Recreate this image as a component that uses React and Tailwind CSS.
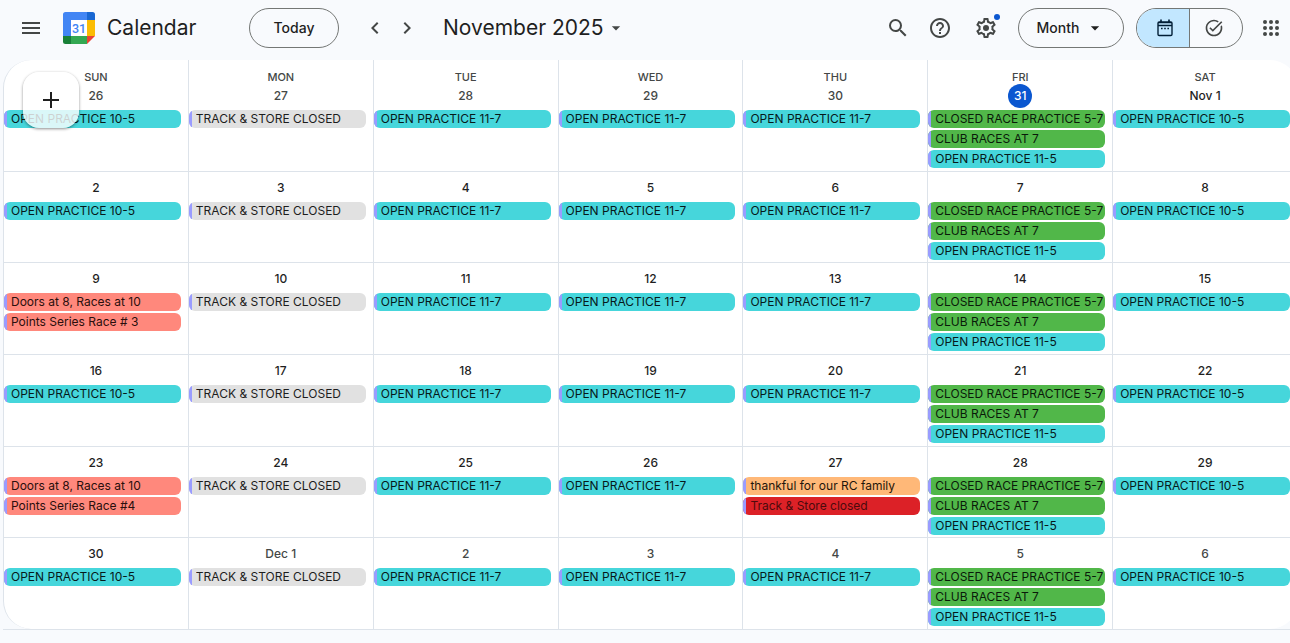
import {
  MdArrowDropDown,
  MdChevronLeft,
  MdChevronRight,
  MdHelpOutline,
  MdMenu,
  MdSearch,
  MdTaskAlt,
} from "react-icons/md";

const WEEKDAYS = ["SUN", "MON", "TUE", "WED", "THU", "FRI", "SAT"];

const COLORS = {
  cyan: "bg-[#46d6db] text-[#06191a]",
  gray: "bg-[#e1e1e1] text-[#1d1d1d]",
  green: "bg-[#51b749] text-[#0a1a09]",
  salmon: "bg-[#ff887c] text-[#2a0f0d]",
  orange: "bg-[#ffb878] text-[#1f160b]",
  red: "bg-[#dc2127] text-[#4d0a0c]",
};

const sunday = [{ title: "OPEN PRACTICE 10-5", color: "cyan" }];
const closed = [{ title: "TRACK & STORE CLOSED", color: "gray" }];
const weekday = [{ title: "OPEN PRACTICE 11-7", color: "cyan" }];
const friday = [
  { title: "CLOSED RACE PRACTICE 5-7", color: "green" },
  { title: "CLUB RACES AT 7", color: "green" },
  { title: "OPEN PRACTICE 11-5", color: "cyan" },
];
const saturday = [{ title: "OPEN PRACTICE 10-5", color: "cyan" }];

// Regular opening hours, Sunday to Saturday
const regularWeek = [
  sunday,
  closed,
  weekday,
  weekday,
  weekday,
  friday,
  saturday,
];

const raceDay = (series) => [
  { title: "Doors at 8, Races at 10", color: "salmon" },
  { title: series, color: "salmon" },
];

const thanksgiving = [
  { title: "thankful for our RC family", color: "orange" },
  { title: "Track & Store closed", color: "red" },
];

const WEEKS = [
  { days: ["26", "27", "28", "29", "30", "31", "Nov 1"] },
  { days: ["2", "3", "4", "5", "6", "7", "8"] },
  {
    days: ["9", "10", "11", "12", "13", "14", "15"],
    special: { 0: raceDay("Points Series Race # 3") },
  },
  { days: ["16", "17", "18", "19", "20", "21", "22"] },
  {
    days: ["23", "24", "25", "26", "27", "28", "29"],
    special: { 0: raceDay("Points Series Race #4"), 4: thanksgiving },
  },
  { days: ["30", "Dec 1", "2", "3", "4", "5", "6"] },
];

// Days outside of November are drawn lighter
const isOutside = (week, day) =>
  (week === 0 && day < 6) || (week === 5 && day > 0);

const CalendarLogo = () => (
  <svg viewBox="0 0 32 32" className="size-8 shrink-0" aria-hidden="true">
    <path d="M2.5 0H24v8H8v16H0V2.5A2.5 2.5 0 0 1 2.5 0z" fill="#4285f4" />
    <path d="M24 0h5.5A2.5 2.5 0 0 1 32 2.5V8h-8z" fill="#1967d2" />
    <path d="M24 8h8v16h-8z" fill="#fbbc04" />
    <path d="M8 24h16v8H8z" fill="#34a853" />
    <path d="M0 24h8v8H2.5A2.5 2.5 0 0 1 0 29.5z" fill="#188038" />
    <path d="M24 24h8l-8 8z" fill="#ea4335" />
    <path d="M8 8h16v16H8z" fill="#fff" />
    <text
      x="16"
      y="20.500"
      textAnchor="middle"
      fontSize="12.500"
      fontWeight="500"
      fontFamily="Roboto, sans-serif"
      fill="#4285f4"
    >
      31
    </text>
  </svg>
);

const SettingsIcon = () => (
  <svg viewBox="0 0 24 24" className="size-6" fill="currentColor">
    <path d="M19.430 12.980c.04-.32.07-.64.07-.98s-.03-.66-.07-.98l2.110-1.650c.19-.15.24-.42.12-.64l-2-3.460a.5.5 0 0 0-.61-.22l-2.490 1c-.52-.4-1.080-.73-1.690-.98l-.38-2.650A.488.488 0 0 0 14 2h-4c-.25 0-.46.18-.49.42l-.38 2.650c-.61.25-1.170.59-1.690.98l-2.490-1a.566.566 0 0 0-.18-.03c-.17 0-.34.09-.43.25l-2 3.460c-.13.22-.07.49.12.64l2.110 1.650c-.04.32-.07.65-.07.98s.03.66.07.98l-2.110 1.650c-.19.15-.24.42-.12.64l2 3.460a.5.5 0 0 0 .61.22l2.490-1c.52.4 1.080.73 1.690.98l.38 2.650c.03.24.24.42.49.42h4c.25 0 .46-.18.49-.42l.38-2.650c.61-.25 1.170-.59 1.690-.98l2.490 1c.06.02.12.03.18.03.17 0 .34-.09.43-.25l2-3.460c.12-.22.07-.49-.12-.64l-2.110-1.650zm-1.980-1.710c.04.31.05.52.05.73s-.02.43-.05.73l-.14 1.130.89.7 1.080.84-.7 1.210-1.270-.51-1.040-.42-.9.68c-.43.32-.84.56-1.250.73l-1.060.43-.16 1.130-.2 1.350h-1.400l-.19-1.350-.16-1.130-1.060-.43c-.43-.18-.83-.41-1.230-.71l-.91-.7-1.060.43-1.270.51-.7-1.210 1.080-.84.89-.7-.14-1.130c-.03-.31-.05-.54-.05-.74s.02-.43.05-.73l.14-1.130-.89-.7-1.080-.84.7-1.210 1.270.51 1.040.42.9-.68c.43-.32.84-.56 1.250-.73l1.060-.43.16-1.130.2-1.350h1.390l.19 1.350.16 1.130 1.060.43c.43.18.83.41 1.230.71l.91.7 1.060-.43 1.270-.51.7 1.210-1.070.85-.89.7.14 1.130z" />
    <circle cx="12" cy="12" r="3" />
  </svg>
);

const CalendarIcon = () => (
  <svg viewBox="0 0 20 20" className="size-5" fill="none" stroke="currentColor">
    <rect x="3" y="4" width="14" height="13.500" rx="1.200" strokeWidth="1.400" />
    <path d="M6 1.500V4M14 1.500V4" strokeWidth="1.600" />
    <path d="M3 4.700h14M3 7.500h14" strokeWidth="1.300" />
    <path d="M6 10.500h1.600M9.200 10.500h1.600M12.400 10.500h1.600" strokeWidth="1.500" />
  </svg>
);

const AppsIcon = () => (
  <svg viewBox="0 0 24 24" className="size-6" fill="currentColor">
    {[6, 12, 18].map((y) =>
      [6, 12, 18].map((x) => <circle key={`${x}-${y}`} cx={x} cy={y} r="2" />),
    )}
  </svg>
);

const PlusIcon = () => (
  <svg viewBox="0 0 24 24" className="size-6" stroke="currentColor">
    <path d="M12 4v16M4 12h16" strokeWidth="2" />
  </svg>
);

const Header = () => (
  <header className="flex h-[60px] shrink-0 items-start justify-between pt-2 pr-[7px] pl-[19px] text-[#444746]">
    <div className="flex h-10 items-center">
      <button type="button" aria-label="Main menu" className="mr-5">
        <MdMenu className="size-6" />
      </button>
      <div className="flex w-[186px] items-center gap-3">
        <CalendarLogo />
        <span className="text-[21px] leading-7 text-[#1f1f1f]">Calendar</span>
      </div>
      <button
        type="button"
        className="h-10 w-[90px] rounded-full border border-[#747775] text-sm font-medium text-[#1f1f1f]"
      >
        Today
      </button>
      <div className="mx-6 flex gap-2">
        <button type="button" aria-label="Previous month">
          <MdChevronLeft className="size-6" />
        </button>
        <button type="button" aria-label="Next month">
          <MdChevronRight className="size-6" />
        </button>
      </div>
      <button type="button" className="flex items-center gap-[2px]">
        <span className="text-[21px] leading-7 whitespace-nowrap text-[#1f1f1f]">
          November 2025
        </span>
        <MdArrowDropDown className="size-5" />
      </button>
    </div>

    <div className="flex h-10 items-center">
      <button type="button" aria-label="Search" className="mr-[18px]">
        <MdSearch className="size-6" />
      </button>
      <button type="button" aria-label="Support" className="mr-[22px]">
        <MdHelpOutline className="size-6" />
      </button>
      <button type="button" aria-label="Settings" className="relative mr-5">
        <SettingsIcon />
        <span className="absolute -top-0.5 -right-0.5 size-[6px] rounded-full bg-[#0b57d0]"></span>
      </button>
      <button
        type="button"
        className="mr-3 flex h-10 w-[106px] items-center justify-center gap-[6px] rounded-full border border-[#747775] text-sm font-medium text-[#1f1f1f]"
      >
        Month
        <MdArrowDropDown className="size-5" />
      </button>
      <div className="mr-4 flex h-10 w-[107px] overflow-hidden rounded-full border border-[#747775]">
        <button
          type="button"
          aria-label="Calendar view"
          className="flex flex-1 items-center justify-center border-r border-[#747775] bg-[#c2e7ff] pl-1 text-[#001d35]"
        >
          <CalendarIcon />
        </button>
        <button
          type="button"
          aria-label="Tasks view"
          className="flex flex-1 items-center justify-center pr-1"
        >
          <MdTaskAlt className="size-5" />
        </button>
      </div>
      <button type="button" aria-label="Google apps">
        <AppsIcon />
      </button>
    </div>
  </header>
);

const EventChip = ({ title, color }) => (
  <button
    type="button"
    className={`flex h-[18px] w-full overflow-hidden rounded-md text-left text-xs leading-[18px] ${COLORS[color]}`}
  >
    <span className="mr-1 h-full w-[3px] shrink-0 bg-[#9a9cff]"></span>
    <span className="min-w-0 overflow-hidden whitespace-nowrap">{title}</span>
  </button>
);

const DayCell = ({ label, events, outside, today }) => (
  <td className="min-w-0 border-r border-[#dde3ea] pt-1">
    <div className="flex h-6 items-center justify-center">
      <span
        className={`text-xs font-medium ${
          today
            ? "flex size-6 items-center justify-center rounded-full bg-[#0b57d0] text-white"
            : outside
              ? "text-[#444746]"
              : "text-[#1f1f1f]"
        }`}
      >
        {label}
      </span>
    </div>
    <div className="mt-[2px] mr-[7px] flex flex-col gap-[2px]">
      {events.map((event) => (
        <EventChip key={event.title} {...event} />
      ))}
    </div>
  </td>
);

const MonthGrid = () => (
  <main className="relative mb-[13px] -mr-2 ml-[3px] flex flex-1 flex-col border-b border-[#dde3ea]">
    <table className="flex flex-1 flex-col overflow-hidden rounded-[28px] border-l border-[#dde3ea] bg-white">
      <thead>
        <tr className="grid h-5 grid-cols-7">
          {WEEKDAYS.map((day) => (
            <th
              key={day}
              scope="col"
              className="border-r border-[#dde3ea] pt-2 text-center text-[11px] leading-[18px] font-medium text-[#444746]"
            >
              {day}
            </th>
          ))}
        </tr>
      </thead>
      <tbody className="flex flex-1 flex-col">
        {WEEKS.map((week, w) => (
          <tr
            key={w}
            className="grid flex-1 grid-cols-7 border-b border-[#dde3ea] last:border-b-0"
          >
            {week.days.map((label, d) => (
              <DayCell
                key={d}
                label={label}
                events={week.special?.[d] ?? regularWeek[d]}
                outside={isOutside(w, d)}
                today={w === 0 && d === 5}
              />
            ))}
          </tr>
        ))}
      </tbody>
    </table>

    {/* Create button floats over the first day */}
    <button
      type="button"
      aria-label="Create"
      className="absolute top-3 left-5 flex size-14 items-center justify-center rounded-2xl bg-white/80 text-[#1f1f1f] shadow-[0_1px_3px_rgba(0,0,0,0.45)]"
    >
      <PlusIcon />
    </button>
  </main>
);

export default function App() {
  return (
    <div className="flex min-h-screen flex-col overflow-hidden bg-[#f8fafd] font-['Inter',sans-serif]">
      <Header />
      <MonthGrid />
    </div>
  );
}
